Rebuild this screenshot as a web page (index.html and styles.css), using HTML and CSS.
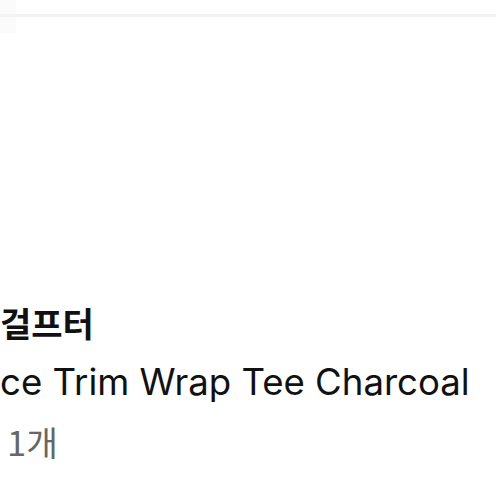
FILE: index.html
```html
<!DOCTYPE html>
<html lang="ko">
<head>
<meta charset="utf-8">
<link rel="stylesheet" href="styles.css">
</head>
<body>
<div class="page">
  <div class="top">
    <div class="thumb thumb-a"></div>
    <div class="divider"></div>
    <div class="thumb thumb-b"></div>
  </div>
  <div class="info">
    <div class="brand">걸프터</div>
    <div class="name">ce Trim Wrap Tee Charcoal</div>
    <div class="qty">1개</div>
  </div>
</div>
</body>
</html>
```
FILE: styles.css
```css
html, body {
  margin: 0;
  padding: 0;
  background: #ffffff;
  overflow: hidden;
}
.page {
  width: 497px;
  height: 497px;
  position: relative;
  overflow: hidden;
  font-family: Inter, "Noto Sans CJK KR", sans-serif;
}
.top {
  display: flex;
  flex-direction: column;
}
.thumb {
  width: 16px;
  background: #fbfbfb;
}
.thumb-a { height: 14px; }
.thumb-b { height: 16px; }
.divider {
  width: 496px;
  height: 3px;
  background: #f3f3f3;
}
.info {
  display: flex;
  flex-direction: column;
  margin-top: 263px;
}
.brand {
  font-family: "Noto Sans CJK KR", sans-serif;
  font-weight: 700;
  font-size: 34px;
  line-height: 53px;
  color: #111;
}
.name {
  font-size: 36.6px;
  line-height: 67px;
  color: #111;
}
.qty {
  font-family: "Noto Sans CJK KR", sans-serif;
  font-size: 34.5px;
  line-height: 50px;
  color: #666;
  padding-left: 7px;
}
```
